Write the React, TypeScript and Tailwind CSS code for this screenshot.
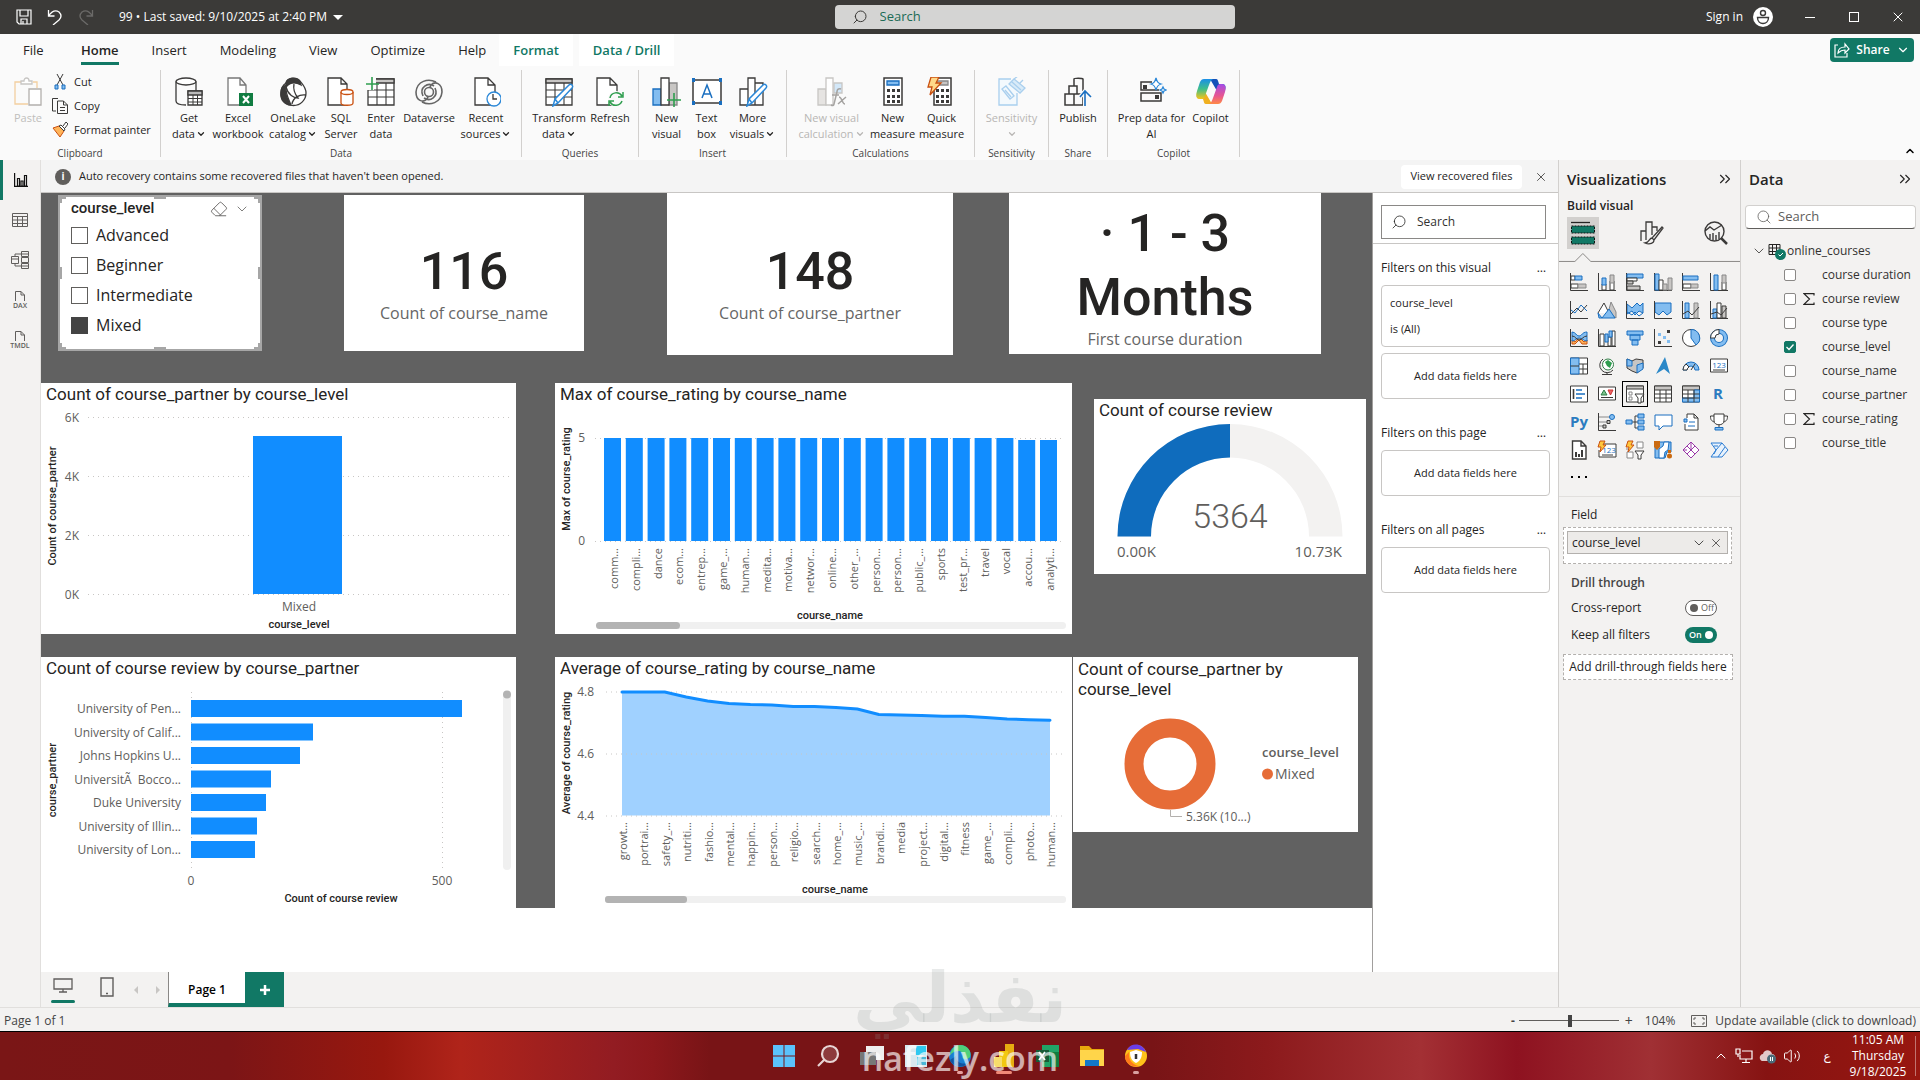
import React from 'react';
import { ChevronDown, ChevronUp, ChevronsRight, X, Search, Eraser, Volume2 } from 'lucide-react';

type Kids = { children?: React.ReactNode };

const DIN = "[font-family:Roboto,'Liberation_Sans',sans-serif]";
const BLUE = '#118dff';
const DARK = '#3b3a39';
const GREEN = '#117865';
const SKY = '#83bdf0';
const LINK = '#1a6fc0';

/* ---------- ribbon icons, 30px box ---------- */

function Big({ children }: Kids) {
  return (
    <svg viewBox="0 0 30 30" className="h-[30px] w-[30px] shrink-0" fill="none" stroke={DARK} strokeWidth="1.3" aria-hidden="true">
      {children}
    </svg>
  );
}

const Sheet = ({ x = 4 }: { x?: number }) => (
  <path d={`M${x} 1h13l7 7v20H${x}zM${x + 13} 1v7h7`} fill="#fff" />
);

const PasteIcon = () => (
  <Big>
    <g stroke="#f3cfa0"><path d="M9 5H2v22h13M20 5h4v6" /></g>
    <path d="M8 7V4h3c0-4 5-4 5 0h3v3z" stroke="#c8c6c4" fill="#fff" />
    <path d="M16 12h12v16H16z" stroke="#b3b0ad" fill="#fff" />
  </Big>
);

const GetDataIcon = () => (
  <Big>
    <ellipse cx="12" cy="4.5" rx="10" ry="3.5" fill="#fff" />
    <path d="M2 4.5V24c0 2.500 4 4 10 4M22 4.5V14" />
    <path d="M14 14h14v14H14z" fill="#fff" />
    <path d="M14 14h14v4H14z" fill="#bbb" />
    <path d="M14 21.5h14M14 25h14M19 18v10M23.5 18v10" strokeWidth="1" />
  </Big>
);

const ExcelIcon = () => (
  <Big>
    <path d="M5 1h12l6 7v20H5zM17 1v7h6" fill="#fff" stroke="#777" />
    <path d="M16 16h14v13H16z" fill="#107c41" stroke="none" />
    <path d="M20 19l6 7M26 19l-6 7" stroke="#fff" strokeWidth="2" />
  </Big>
);

const OneLakeIcon = () => (
  <Big>
    <path d="M8 6c1-5 10-7 14-2 2 3 6 6 6 12a12.500 12.500 0 0 1-25 0c0-4 2-8 5-10z" fill="#fff" />
    <path d="M8 6c2-6 11-6 14-1l1 3C18 5 12 5 8 10z" fill={DARK} />
    <path d="M8 8c-1 8 2 13 5 20C6 28 2 22 3 15c0-3 2-6 5-7z" fill={DARK} />
    <path d="M8 10c2 8 8 11 12 11-4-5-5-9-4-14M14 27c1-6 7-10 14-9" />
  </Big>
);

const SqlIcon = () => (
  <Big>
    <path d="M2 1h13l6 6v21H2zM15 1v6h6" fill="#fff" />
    <path d="M15 15v11c0 3 12 3 12 0V15" stroke="#ca5010" fill="#fff" />
    <ellipse cx="21" cy="15" rx="6" ry="2.5" stroke="#ca5010" fill="#fff" />
  </Big>
);

const TableLines = () => (
  <>
    <path d="M2 2h26v26H2z" fill="#fff" />
    <path d="M2 2h26v4H2z" fill="#c8c6c4" />
    <path d="M2 13h26M2 20h26M11 6v22M20 6v22" strokeWidth="1.1" />
  </>
);

const EnterDataIcon = () => (
  <Big>
    <TableLines />
    <path d="M0 0h10v8H8v5H0z" fill="#fafafa" stroke="none" />
    <path d="M6 0v13M0 7h13" stroke="#2f9e4f" strokeWidth="1.6" />
  </Big>
);

const DataverseIcon = () => (
  <Big>
    <g stroke="#666" strokeWidth="1.6">
      <path d="M22 5C14 1 3 4 2 15c0 9 7 11 11 7 1-1 1-2 0-3" />
      <path d="M8 25c8 4 19 1 20-10 0-9-7-11-11-7-1 1-1 2 0 3" />
      <circle cx="15" cy="15" r="4.500" />
      <path d="M9 19C5 10 14 5 20 9M21 11c4 9-5 14-11 10" />
    </g>
  </Big>
);

const RecentIcon = () => (
  <Big>
    <path d="M4 1h13l7 7v20H4zM17 1v7h7" fill="#fff" />
    <circle cx="23" cy="22" r="7" fill="#fff" stroke="#2b88d8" />
    <path d="M22 17v5h4" />
  </Big>
);

const Pencil = () => (
  <path d="M9 29l2-7L25 8c2-2 5 1 3 3L14 26zM11 22l3 4" fill="#fff" stroke="#2b88d8" strokeWidth="1.5" />
);

const TransformIcon = () => (
  <Big>
    <TableLines />
    <Pencil />
  </Big>
);

const RefreshIcon = () => (
  <Big>
    <Sheet x={2} />
    <circle cx="21" cy="22" r="8" fill="#fafafa" stroke="none" />
    <path d="M15 21c1-6 9-7 12-2m1-4v5h-5M27 24c-2 5-9 6-12 1m-1 4v-5h5" stroke="#2f9e4f" strokeWidth="1.5" />
  </Big>
);

const NewVisualIcon = () => (
  <Big>
    <path d="M1 12h8v16H1z" fill={SKY} stroke={LINK} />
    <path d="M17 6h8v22h-8z" fill="#c8c6c4" stroke="#888" />
    <path d="M9 1h8v27H9z" fill="#fff" />
    <path d="M22 16v14M15 23h14" stroke="#2f9e4f" strokeWidth="1.6" />
  </Big>
);

const TextBoxIcon = () => (
  <Big>
    <path d="M1 3h28v23H1z" fill="#fff" strokeWidth="1.5" />
    <path d="M10 21l5-13 5 13M12 17h6" stroke={LINK} strokeWidth="1.5" />
    <path d="M0 1h3v4H0zM27 1h3v4h-3zM0 24h3v4H0zM27 24h3v4h-3z" fill={LINK} stroke="none" />
  </Big>
);

const MoreVisualsIcon = () => (
  <Big>
    <path d="M2 12h8v16H2zM10 1h7v27h-7zM17 6h8v22h-8z" fill="#fff" />
    <Pencil />
  </Big>
);

const VisualCalcIcon = () => (
  <Big>
    <g stroke="#c8c6c4">
      <path d="M1 12h8v16H1z" fill="#e6e4e2" />
      <path d="M17 6h8v10h-8z" fill="#d3e8f9" />
      <path d="M9 1h7v27H9z" fill="#fff" />
    </g>
    <path d="M24 12c-3-1-4 1-4 3l-3 12c0 1-1 2-3 1M15 18h7M22 20c3 0 3 7 6 7M29 20l-8 7" stroke="#a5a3a1" strokeWidth="1.5" />
  </Big>
);

const KeyDots = () => (
  <path d="M9 12h3v3H9zM14 12h3v3h-3zM19 12h3v3h-3zM9 18h3v3H9zM14 18h3v3h-3zM19 18h3v3h-3zM9 23h3v3H9zM14 23h3v3h-3zM19 23h3v3h-3z" fill={DARK} stroke="none" />
);

const NewMeasureIcon = () => (
  <Big>
    <path d="M6 1h18v27H6z" fill="#fff" strokeWidth="1.5" />
    <path d="M9 4h12v4H9z" fill={SKY} stroke={LINK} />
    <KeyDots />
  </Big>
);

const QuickMeasureIcon = () => (
  <Big>
    <path d="M7 1h17v27H7z" fill="#fff" strokeWidth="1.5" />
    <path d="M10 4h11v4H10z" fill="#c8c6c4" stroke="#888" />
    <KeyDots />
    <path d="M4 0h8L9 6h5L3 18l2-8H1z" fill="#ffd98a" stroke="#ca5010" />
  </Big>
);

const SensitivityIcon = () => (
  <Big>
    <g stroke="#a9cfee">
      <path d="M14 2H2v26h18V16" fill="#f3f9fd" />
      <path d="M5 12l4-3 8 10-4 3zM8 13l6 7" />
      <path d="M12 7l5-5 11 9-5 5zM17 2l4-3M22 7l4-4M15 5l9 8" fill="#d9ebf8" />
    </g>
  </Big>
);

const PublishIcon = () => (
  <Big>
    <path d="M2 28V17h9v11zM6 17V9h8v8M11 28h9V17h-9M11 9V2c0-1 8-1 9 0v12" strokeWidth="1.5" />
    <path d="M22 29V15M17 20l5-6 6 6" stroke="#fafafa" strokeWidth="4" />
    <path d="M22 29V15M17 20l5-6 6 6" stroke={LINK} strokeWidth="1.6" />
  </Big>
);

const PrepIcon = () => (
  <Big>
    <path d="M15 5H4v8h18M4 16h20v8H4z" strokeWidth="1.5" />
    <path d="M6 8h4v4H6zM18 18h4v4h-4z" fill={DARK} stroke="none" />
    <path d="M19 1c1 4 2 5 5 6-3 1-4 2-5 6-1-4-2-5-5-6 3-1 4-2 5-6zM26 10l1 2 2 1-2 1-1 2-1-2-2-1 2-1z" stroke="#2b88d8" fill="#fff" />
  </Big>
);

const CopilotIcon = () => (
  <Big>
    <defs>
      <linearGradient id="cpA" x1="0" y1="0" x2="0" y2="1">
        <stop offset="0" stopColor="#1a8fe8" />
        <stop offset=".5" stopColor="#3fbf8a" />
        <stop offset="1" stopColor="#f5c518" />
      </linearGradient>
      <linearGradient id="cpB" x1="0" y1="0" x2="0" y2="1">
        <stop offset="0" stopColor="#a44be8" />
        <stop offset=".6" stopColor="#e8568f" />
        <stop offset="1" stopColor="#ff8a46" />
      </linearGradient>
    </defs>
    <g stroke="none">
      <path d="M14 2h6c2 0 2 2 3 5h3c4 0 4 3 3 7h-8z" fill="#1450b8" />
      <path d="M16 27h-6c-2 0-2-2-3-5H4c-4 0-4-3-3-7h8z" fill="#f0b020" />
      <path d="M8 2h9c-2 1-3 3-4 6L9 19c-1 3-2 3-5 3-4 0-4-4-3-8l3-9c1-2 2-3 4-3z" fill="url(#cpA)" />
      <path d="M22 27h-9c2-1 3-3 4-6l4-11c1-3 2-3 5-3 4 0 4 4 3 8l-3 9c-1 2-2 3-4 3z" fill="url(#cpB)" />
    </g>
  </Big>
);

/* ---------- ribbon ---------- */

interface RibbonItem {
  icon: React.ReactNode;
  lines: string[];
  w: string;
  arrow?: boolean;
  off?: boolean;
}

const groups: { name: string; w: string; items: RibbonItem[] }[] = [
  {
    name: 'Data',
    w: 'w-[361px]',
    items: [
      { icon: <GetDataIcon />, lines: ['Get', 'data'], w: 'w-12', arrow: true },
      { icon: <ExcelIcon />, lines: ['Excel', 'workbook'], w: 'w-[50px]' },
      { icon: <OneLakeIcon />, lines: ['OneLake', 'catalog'], w: 'w-[60px]', arrow: true },
      { icon: <SqlIcon />, lines: ['SQL', 'Server'], w: 'w-9' },
      { icon: <EnterDataIcon />, lines: ['Enter', 'data'], w: 'w-11' },
      { icon: <DataverseIcon />, lines: ['Dataverse'], w: 'w-[52px]' },
      { icon: <RecentIcon />, lines: ['Recent', 'sources'], w: 'w-[62px]', arrow: true },
    ],
  },
  {
    name: 'Queries',
    w: 'w-[117px]',
    items: [
      { icon: <TransformIcon />, lines: ['Transform', 'data'], w: 'w-[60px]', arrow: true },
      { icon: <RefreshIcon />, lines: ['Refresh'], w: 'w-[42px]' },
    ],
  },
  {
    name: 'Insert',
    w: 'w-[148px]',
    items: [
      { icon: <NewVisualIcon />, lines: ['New', 'visual'], w: 'w-11' },
      { icon: <TextBoxIcon />, lines: ['Text', 'box'], w: 'w-9' },
      { icon: <MoreVisualsIcon />, lines: ['More', 'visuals'], w: 'w-[56px]', arrow: true },
    ],
  },
  {
    name: 'Calculations',
    w: 'w-[188px]',
    items: [
      { icon: <VisualCalcIcon />, lines: ['New visual', 'calculation'], w: 'w-[74px]', arrow: true, off: true },
      { icon: <NewMeasureIcon />, lines: ['New', 'measure'], w: 'w-12' },
      { icon: <QuickMeasureIcon />, lines: ['Quick', 'measure'], w: 'w-[50px]' },
    ],
  },
  {
    name: 'Sensitivity',
    w: 'w-[74px]',
    items: [{ icon: <SensitivityIcon />, lines: ['Sensitivity', ''], w: 'w-[66px]', arrow: true, off: true }],
  },
  { name: 'Share', w: 'w-[59px]', items: [{ icon: <PublishIcon />, lines: ['Publish'], w: 'w-12' }] },
  {
    name: 'Copilot',
    w: 'w-[132px]',
    items: [
      { icon: <PrepIcon />, lines: ['Prep data for', 'AI'], w: 'w-[74px]' },
      { icon: <CopilotIcon />, lines: ['Copilot'], w: 'w-11' },
    ],
  },
];

function RibbonButton({ item }: { item: RibbonItem }) {
  return (
    <button className={`flex flex-col items-center ${item.w} ${item.off ? 'text-[#b8b6b4]' : 'text-[#252423]'}`}>
      {item.icon}
      <span className="mt-[3px] flex flex-col items-center text-[11px] leading-4 whitespace-nowrap">
        {item.lines.map((line, i) => (
          <span key={i} className="flex h-4 items-center">
            {line}
            {item.arrow && i === item.lines.length - 1 && <ChevronDown className="ml-px h-2.5 w-2.5" strokeWidth={3} />}
          </span>
        ))}
      </span>
    </button>
  );
}

function Ribbon() {
  return (
    <div className="flex h-[93px] py-[3px]">
      <div className="flex w-[161px] flex-col border-r border-[#d2d0ce]">
        <div className="flex flex-1 pl-3">
          <button className="mt-[7px] flex w-8 flex-col items-center text-[11px] leading-4 text-[#c0bebc]" disabled>
            <PasteIcon />
            <span className="mt-[3px]">Paste</span>
          </button>
          <div className="ml-2 flex flex-col text-[11px] leading-6 text-[#252423]">
            <button className="flex h-6 items-center gap-1.5">
              <svg viewBox="0 0 16 16" className="h-4 w-4" fill="none" stroke={DARK}>
                <path d="M5 0l6 11M11 0L5 11" />
                <path d="M3 11h3v4H3zM10 11h3v4h-3z" stroke={LINK} fill={SKY} />
              </svg>
              Cut
            </button>
            <button className="flex h-6 items-center gap-1.5">
              <svg viewBox="0 0 16 16" className="h-4 w-4" fill="none" stroke={DARK}>
                <path d="M4 13H.5V.5H6M5.500 3h6L15.500 7v8.500h-10zM11.500 3v4h4M8 9.500h5M8 12.500h5" />
              </svg>
              Copy
            </button>
            <button className="flex h-6 items-center gap-1.5 whitespace-nowrap">
              <svg viewBox="0 0 16 16" className="h-4 w-4" fill="none">
                <path d="M1 6l6-2 5 5-4 6z" fill="#ffb45a" stroke="#ca5010" />
                <path d="M7 4l2-1 4 4-1 2zM11 4l3-4 2 2-3 4" stroke={DARK} fill="#fff" />
              </svg>
              Format painter
            </button>
          </div>
        </div>
        <span className="text-center text-[10px] leading-2 text-[#444]">Clipboard</span>
      </div>
      {groups.map((g) => (
        <div key={g.name} className={`flex flex-col border-r border-[#d2d0ce] ${g.w}`}>
          <div className="flex flex-1 justify-center pt-[7px]">
            {g.items.map((it) => (
              <RibbonButton key={it.lines[0]} item={it} />
            ))}
          </div>
          <span className="text-center text-[10px] leading-2 text-[#444]">{g.name}</span>
        </div>
      ))}
      <button className="mt-auto mr-1 ml-auto" aria-label="Collapse ribbon">
        <ChevronUp className="h-3 w-3" strokeWidth={3} />
      </button>
    </div>
  );
}

/* ---------- title bar and tabs ---------- */

function TitleBar() {
  return (
    <header className="flex h-[34px] items-center bg-[#3b3a38] text-white">
      <div className="flex flex-[835_1_0%] items-center pl-4">
        <button aria-label="Save">
          <svg viewBox="0 0 16 16" className="h-4 w-4" fill="none" stroke="#fff" strokeWidth="1.2">
            <path d="M1 1h14v14H3l-2-2zM4 1v6h8V1M5 15v-5h6v5M7 12v3" />
          </svg>
        </button>
        <button className="ml-[15px]" aria-label="Undo">
          <svg viewBox="0 0 16 16" className="h-4 w-4" fill="none" stroke="#fff" strokeWidth="1.3">
            <path d="M1.500 1v6h6M1.500 7C5 2 9 1 12 3c3 3 2 6 0 8l-6 5" />
          </svg>
        </button>
        <button className="ml-[15px]" aria-label="Redo">
          <svg viewBox="0 0 16 16" className="h-4 w-4" fill="none" stroke="#6b6a68" strokeWidth="1.3">
            <path d="M14.500 1v6h-6M14.500 7C11 2 7 1 4 3c-3 3-2 6 0 8l6 5" />
          </svg>
        </button>
        <button className="ml-[25px] flex items-center gap-1.5 text-[12px] leading-4">
          99 • Last saved: 9/10/2025 at 2:40 PM
          <span className="h-0 w-0 border-x-[5px] border-t-[5px] border-x-transparent border-t-white" />
        </button>
      </div>
      <label className="flex h-6 w-[400px] items-center gap-3 rounded-sm bg-[#d4d4d3] pl-[17px] text-[#3b3a38]">
        <Search className="h-4 w-4 -scale-x-100" strokeWidth={1.5} />
        <input className="flex-1 bg-transparent text-[13px] outline-none placeholder:text-[#1b6b56]" placeholder="Search" />
      </label>
      <div className="flex flex-[685_1_0%] items-center justify-end pr-3.5 text-[12px]">
        <button className="flex items-center gap-2.5">
          Sign in
          <svg viewBox="0 0 20 20" className="h-5 w-5">
            <circle cx="10" cy="10" r="10" fill="#fff" />
            <circle cx="10" cy="6" r="2.500" fill="none" stroke={DARK} strokeWidth="1.4" />
            <path d="M4.500 10.500h11c0 8-11 8-11 0z" fill="none" stroke={DARK} strokeWidth="1.4" />
          </svg>
        </button>
        <button className="ml-8 h-px w-2.5 bg-white" aria-label="Minimize" />
        <button className="ml-[34px] h-2.5 w-2.5 border border-white" aria-label="Maximize" />
        <button className="ml-[31px]" aria-label="Close"><X className="h-4 w-4" strokeWidth={1.5} /></button>
      </div>
    </header>
  );
}

const tabs = ['Insert', 'Modeling', 'View', 'Optimize', 'Help'];

function Tabs() {
  return (
    <nav className="flex h-[33px] items-start pl-[23px] text-[13px] leading-8 text-[#252423]">
      <button className="w-[58px] text-left">File</button>
      <div className="flex gap-[33px]">
        <button className="flex flex-col font-semibold">
          <span className="h-7 leading-8">Home</span>
          <span className="h-[3px] w-full bg-[#117865]" />
        </button>
        {tabs.map((t) => (
          <button key={t}>{t}</button>
        ))}
      </div>
      <button className="ml-[13px] bg-white px-[14px] font-semibold text-[#117865]">Format</button>
      <button className="ml-1.5 bg-white px-[14px] font-semibold text-[#117865]">Data / Drill</button>
      <button className="mt-1 mr-1.5 ml-auto flex h-6 w-[84px] items-center justify-center gap-1.5 rounded bg-[#117865] text-[12px] leading-6 font-semibold text-white">
        <svg viewBox="0 0 16 16" className="h-4 w-4" fill="none" stroke="#fff" strokeWidth="1.2">
          <path d="M4 3H1v12h12v-4" />
          <path d="M4 11c0-4 3-6 7-6V2l4 5-4 4V8c-3 0-5 1-7 3z" />
        </svg>
        Share
        <ChevronDown className="h-3.5 w-3.5" />
      </button>
    </nav>
  );
}

/* ---------- left rail ---------- */

function Rail() {
  return (
    <nav className="flex w-[41px] flex-col border-r border-[#e1dfdd] bg-[#f3f2f1]">
      <button className="flex h-10 items-center border-l-[3px] border-[#117865] pl-[11px]" aria-label="Report view">
        <svg viewBox="0 0 14 14" className="h-3.5 w-3.5" fill="none" stroke="#111" strokeWidth="1.2">
          <path d="M.6 0v13.400H14M3.500 5.500h2v7.500h-2zM7 8h2v5H7zM10.500 2.500h2v10.500h-2z" />
        </svg>
      </button>
      <button className="flex h-10 items-center justify-center" aria-label="Table view">
        <svg viewBox="0 0 16 16" className="h-4 w-4" fill="none" stroke="#605e5c">
          <path d="M.5 1.500h15v13H.5zM.5 4.500h15M.5 8h15M.5 11.500h15M5.500 4.500v10M10.500 4.500v10" />
        </svg>
      </button>
      <button className="flex h-10 items-center justify-center" aria-label="Model view">
        <svg viewBox="0 0 18 18" className="h-[18px] w-[18px]" fill="none" stroke="#605e5c">
          <path d="M.5 5.500h7v7h-7zM.5 8h7M10.500.5h7v5h-7zM10.500 3h7M10.500 6.500h7v5h-7zM10.500 12.500h7v5h-7zM10.500 15h7M4 5.500V3h6M4 12.500V15h6" />
        </svg>
      </button>
      {['DAX', 'TMDL'].map((t) => (
        <button key={t} className="flex h-10 flex-col items-center justify-center text-[#605e5c]">
          <svg viewBox="0 0 12 11" className="h-[11px] w-3" fill="none" stroke="#605e5c">
            <path d="M1.500 10V.5H7L10.500 4v6M7 .5V4h3.500" />
          </svg>
          <span className="text-[7px] leading-[7px] font-semibold">{t}</span>
        </button>
      ))}
    </nav>
  );
}

/* ---------- report visuals ---------- */

function Visual({ title, className, children }: Kids & { title: string; className: string }) {
  return (
    <section className={`bg-white ${className}`}>
      <h2 className={`px-[5px] pb-0.5 text-[17px] leading-[22px] text-[#252423] ${DIN}`}>{title}</h2>
      {children}
    </section>
  );
}

function Tick({ x, y, anchor = 'end', children }: Kids & { x: number; y: number; anchor?: 'end' | 'middle' | 'start' }) {
  return <text x={x} y={y + 4} textAnchor={anchor} fontSize="12" fill="#605e5c">{children}</text>;
}

function AxisTitle({ x, y, vertical, children }: Kids & { x: number; y: number; vertical?: boolean }) {
  return (
    <text
      className={DIN}
      textAnchor="middle"
      fontSize="11"
      fontWeight="500"
      fill="#252423"
      transform={`translate(${x} ${y + (vertical ? 0 : 4)})${vertical ? ' rotate(-90)' : ''}`}
    >
      {children}
    </text>
  );
}

function Slant({ x, y, children }: Kids & { x: number; y: number }) {
  return (
    <text textAnchor="end" fontSize="11" fill="#605e5c" transform={`translate(${x} ${y}) rotate(-90)`}>
      {children}
    </text>
  );
}

const Dots = ({ d }: { d: string }) => <path d={d} stroke="#c8c6c4" strokeDasharray="1 4" fill="none" />;

function LevelChart() {
  return (
    <svg viewBox="0 0 475 227" className="w-full">
      {[6, 4, 2, 0].map((k, i) => (
        <React.Fragment key={k}>
          <Tick x={38} y={11 + i * 59}>{k}K</Tick>
          <Dots d={`M47 ${10.5 + i * 59}H471`} />
        </React.Fragment>
      ))}
      <rect x="212" y="29" width="89" height="158" fill={BLUE} />
      <Tick x={258} y={200} anchor="middle">Mixed</Tick>
      <AxisTitle x={258} y={217}>course_level</AxisTitle>
      <AxisTitle x={15} y={99} vertical>Count of course_partner</AxisTitle>
    </svg>
  );
}

const maxNames = [
  'comm...', 'compli...', 'dance', 'ecom...', 'entrep...', 'game_...', 'human...', 'medita...', 'motiva...', 'networ...', 'online...',
  'other_...', 'person...', 'person...', 'public_...', 'sports', 'test_pr...', 'travel', 'vocal', 'accou...', 'analyti...',
];

function MaxChart() {
  return (
    <svg viewBox="0 0 517 227" className="w-full">
      <Tick x={30} y={31}>5</Tick>
      <Tick x={30} y={134}>0</Tick>
      <Dots d="M40 31.500H509M40 134.500H509" />
      {maxNames.map((n, i) => {
        const x = 49 + i * 21.8;
        const top = i > 18 ? 33 : 31;
        return (
          <React.Fragment key={i}>
            <rect x={x} y={top} width="17" height={134 - top} fill={BLUE} />
            <Slant x={x + 14} y={141}>{n}</Slant>
          </React.Fragment>
        );
      })}
      <AxisTitle x={275} y={208}>course_name</AxisTitle>
      <AxisTitle x={15} y={72} vertical>Max of course_rating</AxisTitle>
      <rect x="41" y="215" width="470" height="7" rx="3.5" fill="#f0f0f0" />
      <rect x="41" y="215" width="84" height="7" rx="3.5" fill="#b3b3b3" />
    </svg>
  );
}

const partners: [string, number][] = [
  ['University of Pen...', 271],
  ['University of Calif...', 122],
  ['Johns Hopkins U...', 109],
  ['UniversitÃ\u00a0 Bocco...', 80],
  ['Duke University', 75],
  ['University of Illin...', 66],
  ['University of Lon...', 64],
];

function PartnerChart() {
  return (
    <svg viewBox="0 0 475 227" className="w-full">
      <Dots d="M150.500 11V189M401.500 11V189" />
      {partners.map(([name, w], i) => (
        <React.Fragment key={name}>
          <Tick x={140} y={28 + i * 23.5}>{name}</Tick>
          <rect x="150" y={19 + i * 23.5} width={w} height="17" fill={BLUE} />
        </React.Fragment>
      ))}
      <Tick x={150} y={200} anchor="middle">0</Tick>
      <Tick x={401} y={200} anchor="middle">500</Tick>
      <AxisTitle x={300} y={217}>Count of course review</AxisTitle>
      <AxisTitle x={15} y={99} vertical>course_partner</AxisTitle>
      <rect x="462" y="11" width="8" height="178" rx="4" fill="#f0f0f0" />
      <circle cx="466" cy="13.5" r="4" fill="#b3b3b3" />
    </svg>
  );
}

const avgNames = [
  'growt...', 'portrai...', 'safety_...', 'nutriti...', 'fashio...', 'mental...', 'happin...', 'person...', 'religio...', 'search...', 'home_...',
  'music_...', 'brandi...', 'media', 'project...', 'digital...', 'fitness', 'game_...', 'compli...', 'photo...', 'human...',
];
const avgY = [11, 11, 11, 16, 20, 22.5, 23.5, 24, 25.5, 25.5, 26.5, 28, 33.5, 34, 34.5, 35.3, 35.3, 36.5, 38, 38.7, 39.3];

function AverageChart() {
  const line = avgY.map((y, i) => `${67 + i * 21.4} ${y}`).join('L');
  return (
    <svg viewBox="0 0 517 227" className="w-full">
      <path d={`M${line}V134.500H67z`} fill="#a0d1ff" />
      {['4.8', '4.6', '4.4'].map((t, i) => (
        <React.Fragment key={t}>
          <Tick x={39} y={11 + i * 62}>{t}</Tick>
          <Dots d={`M51 ${11 + i * 62}H511`} />
        </React.Fragment>
      ))}
      <path d={`M${line}`} fill="none" stroke="#118dff" strokeWidth="3" strokeLinecap="round" />
      {avgNames.map((n, i) => (
        <Slant key={i} x={72 + i * 21.4} y={141}>{n}</Slant>
      ))}
      <AxisTitle x={280} y={208}>course_name</AxisTitle>
      <AxisTitle x={15} y={72} vertical>Average of course_rating</AxisTitle>
      <rect x="50" y="215" width="461" height="7" rx="3" fill="#f0f0f0" />
      <rect x="50" y="215" width="82" height="7" rx="3" fill="#b3b3b3" />
    </svg>
  );
}

function Gauge() {
  return (
    <svg viewBox="0 0 272 151" className="w-full">
      <path d="M23.500 113.500A112.500 112.500 0 0 1 248.500 113.500H215A79 79 0 0 0 57 113.500z" fill="#f3f2f1" />
      <path d="M23.500 113.500A112.500 112.500 0 0 1 136 1V34.500A79 79 0 0 0 57 113.500z" fill="#0f6cbd" />
      <text className={DIN} x="136" y="105" textAnchor="middle" fontSize="34" fontWeight="300" fill="#605e5c">5364</text>
      <text x="23" y="134" fontSize="15" fill="#605e5c">0.00K</text>
      <text x="248" y="134" textAnchor="end" fontSize="15" fill="#605e5c">10.73K</text>
    </svg>
  );
}

function Donut() {
  return (
    <svg viewBox="0 0 285 132" className="w-full">
      <circle cx="97" cy="64" r="36" fill="none" stroke="#e66c37" strokeWidth="19" />
      <path d="M97.500 110V116.500H109" fill="none" stroke="#b3b0ad" />
      <Tick x={113} y={117} anchor="start">5.36K (10...)</Tick>
      <text x="189" y="57" fontSize="13" fontWeight="600" fill="#605e5c">course_level</text>
      <circle cx="194.500" cy="74" r="5.500" fill="#e66c37" />
      <text x="202" y="79" fontSize="14" fill="#605e5c">Mixed</text>
    </svg>
  );
}

function Card({ value, label, className }: { value: string[]; label: string; className: string }) {
  return (
    <section className={`flex flex-col items-center bg-white ${className}`}>
      <div className={`text-center text-[52px] leading-[64px] font-medium text-[#252423] ${DIN}`}>
        {value.map((v) => (
          <p key={v}>{v}</p>
        ))}
      </div>
      <p className="text-[16px] leading-[18px] text-[#666]">{label}</p>
    </section>
  );
}

function Handles() {
  const h = 'absolute border-[#a6a6a6]';
  return (
    <>
      <i className={`${h} -top-0.5 -left-0.5 h-2 w-2 border-t-4 border-l-4`} />
      <i className={`${h} -top-0.5 -right-0.5 h-2 w-2 border-t-4 border-r-4`} />
      <i className={`${h} -bottom-0.5 -left-0.5 h-2 w-2 border-b-4 border-l-4`} />
      <i className={`${h} -right-0.5 -bottom-0.5 h-2 w-2 border-r-4 border-b-4`} />
      <i className={`${h} -top-0.5 left-1/2 w-3 -translate-x-1/2 border-t-4`} />
      <i className={`${h} -bottom-0.5 left-1/2 w-3 -translate-x-1/2 border-b-4`} />
      <i className={`${h} top-1/2 -left-0.5 h-3 -translate-y-1/2 border-l-4`} />
      <i className={`${h} top-1/2 -right-0.5 h-3 -translate-y-1/2 border-r-4`} />
    </>
  );
}

function Slicer() {
  return (
    <section className="relative col-start-2 mt-0.5 h-[156px] border-2 border-[#a6a6a6] bg-white pl-[11px]">
      <div className="flex h-[23px] items-center pr-2.5 text-[#605e5c]">
        <h2 className={`flex-1 text-[15px] font-medium text-[#252423] ${DIN}`}>course_level</h2>
        <Eraser className="h-[18px] w-[18px]" strokeWidth={1.2} />
        <ChevronDown className="ml-1.5 h-4 w-4" strokeWidth={1.2} />
      </div>
      {['Advanced', 'Beginner', 'Intermediate', 'Mixed'].map((l) => (
        <label key={l} className="flex h-[30px] items-center gap-2 text-[16px] text-[#252423]">
          <input
            type="checkbox"
            defaultChecked={l === 'Mixed'}
            className="h-[17px] w-[17px] appearance-none border border-[#605e5c] bg-white checked:border-[#444] checked:bg-[#444]"
          />
          {l}
        </label>
      ))}
      <Handles />
    </section>
  );
}

function Report() {
  return (
    <main className="min-w-0 flex-1 bg-white">
      <div className="bg-[#616161]">
        <div className="grid h-[190px] grid-cols-[17fr_204fr_82fr_240fr_83fr_286fr_56fr_312fr_51fr] items-start">
          <Slicer />
          <Card className="col-start-4 mt-0.5 h-[156px] pt-[45px]" value={['116']} label="Count of course_name" />
          <Card className="col-start-6 h-[162px] pt-[47px]" value={['148']} label="Count of course_partner" />
          <Card className="col-start-8 h-[161px] pt-[9px]" value={['· 1 - 3', 'Months']} label="First course duration" />
        </div>
        <div className="grid h-[274px] grid-cols-[475fr_39fr_517fr_22fr_272fr_6fr] items-start">
          <Visual title="Count of course_partner by course_level" className="col-start-1"><LevelChart /></Visual>
          <Visual title="Max of course_rating by course_name" className="col-start-3"><MaxChart /></Visual>
          <Visual title="Count of course review" className="col-start-5 mt-4"><Gauge /></Visual>
        </div>
        <div className="grid grid-cols-[475fr_39fr_517fr_1fr_285fr_14fr] items-start">
          <Visual title="Count of course review by course_partner" className="col-start-1"><PartnerChart /></Visual>
          <Visual title="Average of course_rating by course_name" className="col-start-3"><AverageChart /></Visual>
          <section className="col-start-5 bg-white pt-0.5">
            <h2 className={`px-[5px] pb-px text-[17px] leading-5 text-[#252423] ${DIN}`}>
              Count of course_partner by
              <br />
              course_level
            </h2>
            <Donut />
          </section>
        </div>
      </div>
    </main>
  );
}

function InfoBar() {
  return (
    <div className="flex h-[33px] items-center border-b border-[#c8c6c4] bg-[#f4f4f4] pt-px pr-2.5 pl-3.5 text-[#252423]">
      <span className="mr-2 flex h-4 w-4 items-center justify-center rounded-full bg-[#605e5c] text-[10px] font-bold text-white">i</span>
      <span className="flex-1 text-[11px]">Auto recovery contains some recovered files that haven't been opened.</span>
      <button className="h-6 w-[121px] rounded-sm bg-white text-[11px]">View recovered files</button>
      <button className="ml-3" aria-label="Dismiss"><X className="h-3.5 w-3.5" strokeWidth={1.3} /></button>
    </div>
  );
}

/* ---------- filters ---------- */

const AddBox = () => (
  <button className="h-[46px] w-full rounded-sm border border-[#c8c6c4] bg-white text-[11px]">Add data fields here</button>
);

const SectionHead = ({ children }: Kids) => (
  <h3 className="flex h-8 items-center justify-between pr-1 pb-0.5">
    {children}
    <button className="leading-3" aria-label="More options">…</button>
  </h3>
);

function Filters() {
  return (
    <aside className="w-[186px] border-l border-[#a19f9d] bg-white text-[12px] text-[#252423]">
      <div className="border-b border-[#c8c6c4] pt-3 pr-3 pb-1 pl-2">
        <label className="flex h-[34px] items-center gap-2.5 border border-[#8a8886] pl-[9px]">
          <Search className="h-4 w-4 -scale-x-100" strokeWidth={1.2} />
          <input className="w-24 bg-transparent outline-none placeholder:text-[#323130]" placeholder="Search" />
        </label>
      </div>
      <div className="pt-[9px] pr-2 pl-2">
        <SectionHead>Filters on this visual</SectionHead>
        <div className="mb-1.5 h-[62px] rounded-sm border border-[#c8c6c4] px-2 pt-1 text-[11px] leading-[26px]">
          <p>course_level</p>
          <p>is (All)</p>
        </div>
        <AddBox />
        <div className="h-[19px]" />
        <SectionHead>Filters on this page</SectionHead>
        <AddBox />
        <div className="h-[19px]" />
        <SectionHead>Filters on all pages</SectionHead>
        <AddBox />
      </div>
    </aside>
  );
}

/* ---------- visualizations ---------- */

const Axis = () => <path d="M.5 0v17.500H18" />;
const MiniBolt = () => <path d="M2 0h5L5 4h3l-6 7 1-5H0z" fill="#ffc83d" stroke="#ca5010" />;

const vizIcons: [string, React.ReactNode][] = [
  ['Stacked bar', <><Axis /><path d="M1 3h4v4H1zM1 11h7v4H1z" fill="#fff" /><path d="M5 3h7v4H5z" fill={SKY} stroke={LINK} /><path d="M8 11h8v4H8z" fill="#c8c6c4" stroke="#888" /></>],
  ['Stacked column', <><Axis /><path d="M4 11h4v6H4zM12 8h4v9h-4z" fill="#fff" /><path d="M4 5h4v7H4z" fill={SKY} stroke={LINK} /><path d="M12 2h4v8h-4z" fill="#c8c6c4" stroke="#888" /></>],
  ['Clustered bar', <><Axis /><path d="M1 1h16v4H1z" fill={SKY} stroke={LINK} /><path d="M1 5h10v3H1z" fill="#fff" /><path d="M1 8h6v3H1zM1 13h13v4H1z" fill="#c8c6c4" /></>],
  ['Clustered column', <><Axis /><path d="M1 1h4v16H1z" fill={SKY} stroke={LINK} /><path d="M5 7h4v10H5z" fill="#fff" /><path d="M9 11h4v6H9zM14 5h4v12h-4z" fill="#c8c6c4" stroke="#888" /></>],
  ['100% bar', <><Axis /><path d="M1 11h8v4H1z" fill="#fff" /><path d="M1 3h15v4H1z" fill={SKY} stroke={LINK} /><path d="M9 11h7v4H9z" fill="#c8c6c4" stroke="#888" /></>],
  ['100% column', <><Axis /><path d="M4 2h4v15H4z" fill={SKY} stroke={LINK} /><path d="M12 9h4v8h-4z" fill="#fff" /><path d="M12 2h4v8h-4z" fill="#c8c6c4" stroke="#888" /></>],
  ['Line', <><Axis /><path d="M1 13l6-6 4 4 6-7" /><path d="M1 9l4 3 6-8 6 6" stroke={LINK} /></>],
  ['Area', <><path d="M10 12l3-11 5 10v6z" fill="#c8c6c4" stroke="#888" /><path d="M0 12L6 2l5 10" fill="#fff" /><path d="M1 17L0 12l4 5 7-9 6 9z" fill={SKY} stroke={LINK} /></>],
  ['Stacked area', <><path d="M1 3l5 4 5-5 3 3 3-3v10l-4-2-4 4-3-4-5 3z" fill={SKY} stroke={LINK} /><path d="M1 11l5 3 3-3 4 4 4-3" stroke={LINK} /><Axis /></>],
  ['100% area', <><path d="M1 2h16v9l-4 3-4-4-4 4-4-3z" fill={SKY} stroke={LINK} /><Axis /></>],
  ['Line and stacked column', <><Axis /><path d="M3 2h4v15H3z" fill={SKY} stroke={LINK} /><path d="M12 2h4v15h-4z" fill="#c8c6c4" stroke="#888" /><path d="M1 13l5-3 4 4 7-8" /></>],
  ['Line and clustered column', <><Axis /><path d="M3 8h4v9H3z" fill={SKY} stroke={LINK} /><path d="M7 2h4v15H7z" fill="#fff" /><path d="M12 5h4v12h-4z" fill="#c8c6c4" /><path d="M1 13l6-2 4 3 6-7" /></>],
  ['Ribbon', <><Axis /><path d="M2 15h3l4-4 3 4h5v-4l-3 2-5-5-4 5-3-2z" fill="#ffb45a" stroke="#ca5010" /><path d="M2 3c4 0 4 4 7 4s3-4 8-4v9c-4 0-4-3-8-3s-3 3-7 3z" fill={SKY} stroke={LINK} /><path d="M2 7c4 0 4 4 7 4s4-4 8-4" stroke={DARK} /></>],
  ['Waterfall', <><Axis /><path d="M2 5h4v12H2zM10 8h3v9h-3zM14 2h3v15h-3z" fill="#fff" /><path d="M7 5h3v8H7zM11 2h3v6h-3z" fill={SKY} stroke={LINK} /></>],
  ['Funnel', <path d="M1 2h16v4H1zM4 6h10v5H4zM6 11h6v5H6z" fill={SKY} stroke={LINK} />],
  ['Scatter', <><Axis /><path d="M13 1h3v3h-3zM4 12h3v3H4z" fill={DARK} stroke="none" /><path d="M4 4h3v3H4zM9 7h3v3H9zM13 11h3v3h-3z" fill={SKY} stroke="none" /></>],
  ['Pie', <><circle cx="9" cy="9" r="8.5" fill="#fff" /><path d="M9 9V.5A8.500 8.500 0 0 1 14 16z" fill={SKY} stroke={LINK} /></>],
  ['Donut', <><circle cx="9" cy="9" r="6.5" stroke={LINK} strokeWidth="5" /><circle cx="9" cy="9" r="6.5" stroke={SKY} strokeWidth="3" /><path d="M9 .5A8.500 8.500 0 0 0 .5 9H5a4 4 0 0 1 4-4z" fill="#fff" /></>],
  ['Treemap', <><path d="M.5 1h17v16H.5z" fill="#fff" /><path d="M.5 1H9v16H.5z" fill={SKY} stroke={LINK} /><path d="M.5 9H9M9 7h9M9 12h9M13 7v10" /></>],
  ['Map', <><path d="M5 2a7.500 7.500 0 1 0 10 11" /><circle cx="10" cy="7.5" r="5.5" fill="#fff" stroke="#2f7d46" /><path d="M7 5l3-2 4 3-2 5-3-2z" fill="#2f9e4f" stroke="none" /><path d="M9 15v2M4 17.500h10" /></>],
  ['Filled map', <><path d="M1 2l5 2 4-2 7 1v8l-6 5-5-2-5-3z" fill="#c8c6c4" /><path d="M1 2l5 2v5H1zM11 8l6-2v6l-6 4z" fill={SKY} stroke={LINK} /></>],
  ['Azure map', <path d="M11 0L2 17l8-5 6 5z" fill="#2b88c8" stroke="none" />],
  ['Gauge', <><path d="M1 13a8 8 0 0 1 16 0h-4a4 4 0 0 0-8 0z" fill={SKY} stroke={LINK} /><path d="M1 13a8 8 0 0 1 3-6l3 3a4 4 0 0 0-2 3z" fill="#fff" /><path d="M9 13l4-6" /></>],
  ['Card', <><path d="M.5 2h17v13H.5z" fill="#fff" /><path d="M3 13h12" /><text x="9" y="10.500" fontSize="8" textAnchor="middle" fill={LINK} stroke="none">123</text></>],
  ['Multi-row card', <><path d="M.5 1h17v16H.5z" fill="#fff" /><path d="M3.500 4v10" strokeWidth="1.6" /><path d="M6 5h6M6 9h9M6 13h6" stroke={LINK} strokeWidth="1.6" /></>],
  ['KPI', <><path d="M.5 2h17v13H.5z" fill="#fff" /><path d="M3 10l3-5 3 5z" fill="#7ac28b" stroke="#2f7d46" /><path d="M10 5h5l-2.500 5z" fill="#e66" stroke="#c33" /><path d="M3 12.500h12" /></>],
  ['Slicer', <><path d="M.5 1h17v16H.5z" fill="#fff" /><path d="M.5 1h17v3H.5z" fill="#c8c6c4" /><path d="M3 7h3v3H3zM3 12h3v3H3z" stroke="#888" /><path d="M9 9h9l-3 4v5h-3v-5z" fill="#fff" /></>],
  ['Table', <><path d="M.5 1h17v16H.5z" fill="#fff" /><path d="M.5 1h17v4H.5z" fill="#c8c6c4" /><path d="M.5 9h17M.5 13h17M6 5v12M12 5v12" /></>],
  ['Matrix', <><path d="M.5 1h17v16H.5z" fill="#fff" /><path d="M.5 1h17v4H.5z" fill="#c8c6c4" /><path d="M12 5h5.500v12H.5v-4H12z" fill={SKY} stroke={LINK} /><path d="M.5 9h17M.5 13h17M6 5v12M12 5v12" /></>],
  ['R script', <text x="8" y="14" fontSize="15" fontWeight="700" textAnchor="middle" fill="#2b7cc0" stroke="none">R</text>],
  ['Python', <text x="9" y="14" fontSize="15" fontWeight="700" textAnchor="middle" fill="#2b7cc0" stroke="none">Py</text>],
  ['Key influencers', <><Axis /><path d="M1 4h12M1 9h8M1 13h4" stroke="#888" /><circle cx="14" cy="4" r="2.5" fill={SKY} stroke={LINK} /><path d="M9 7.500h3v3H9zM5 12h3v3H5z" fill="#c8c6c4" /></>],
  ['Decomposition tree', <><path d="M6 9h6M9 3v12M9 3h3M9 15h3" /><path d="M0 7h6v4H0zM12 1h6v4h-6zM12 7h6v4h-6zM12 13h6v4h-6z" fill={SKY} stroke={LINK} /></>],
  ['Q&A', <path d="M1 2h17v11H9l-4 4v-4H1z" fill="#fff" stroke={LINK} />],
  ['Narrative', <><path d="M5 5V1h7l4 4v12H3v-6M12 1v4h4" fill="#fff" /><path d="M2 6h3v3H2z" fill={SKY} stroke={LINK} /><path d="M7 9h6M6 13h7" stroke={LINK} /></>],
  ['Goals', <><path d="M4 1h10v7c0 5-10 5-10 0zM4 3H.5c0 4 1 5 4 6M14 3h3.500c0 4-1 5-4 6M9 12v4" fill="#fff" /><path d="M5 14.500h8V17H5z" fill={SKY} stroke={LINK} /></>],
  ['Paginated report', <><path d="M2.500 0H11l5 5v13H2.500zM11 0v5h5" fill="#fff" strokeWidth="1.4" /><path d="M5 11h2v5H5zM8 13h2v3H8zM11 9h2v7h-2z" fill={DARK} stroke="none" /></>],
  ['Card (new)', <><path d="M3 3h15v13H1V9" fill="#fff" /><path d="M4 14h11" /><text x="11" y="12" fontSize="8" textAnchor="middle" fill={LINK} stroke="none">123</text><MiniBolt /></>],
  ['Slicer (new)', <><path d="M11 1h6v6h-6zM1 11h6v6H1zM1 9V7" stroke="#888" fill="#fff" /><path d="M9 10h9l-3 4v4h-3v-4z" fill="#fff" /><MiniBolt /></>],
  ['ArcGIS', <><path d="M1 1h16v10H13l-2 6H1z" fill={SKY} stroke={LINK} /><path d="M10 1L9 5l-4 3v9h5l1-6 3-2 1-8z" fill="#fff" stroke={LINK} /><path d="M0 0h6v6L3 9 0 6zM13 15a2.500 2.500 0 1 0 5 0 2.500 2.500 0 0 0-5 0zM14 9h3v3h-3z" fill="#ca6a10" stroke="none" /></>],
  ['Power Apps', <><path d="M9 1l8 8-8 8-8-8z" fill="#fff" stroke="#9a3aa8" /><path d="M5 5l8 8M13 5l-8 8M9 9V1M1 9h4" stroke="#9a3aa8" /></>],
  ['Power Automate', <path d="M1 2h11l6 7-6 7H1l5-7zM6 9l6-7M8 16l7-10M4 5h4M4 13l2-4" stroke="#2b7cd3" fill="#e8f2fc" />],
];

function PaneTitle({ children }: Kids) {
  return (
    <div className="flex h-[33px] items-end justify-between pr-1.5 pl-2 text-[#252423]">
      <h2 className="text-[15px] leading-[27px] font-semibold">{children}</h2>
      <button className="mb-[5px]" aria-label="Collapse pane"><ChevronsRight className="h-[18px] w-[18px]" strokeWidth={1.5} /></button>
    </div>
  );
}

function Toggle({ label, on }: { label: string; on?: boolean }) {
  return (
    <label className="flex h-[27px] items-center justify-between pr-[23px] pl-3">
      {label}
      <input type="checkbox" role="switch" defaultChecked={on} className="sr-only" />
      {on ? (
        <span className="flex h-4 w-8 items-center justify-between rounded-full bg-[#117865] px-1 text-[9px] font-semibold text-white">
          On
          <i className="h-2 w-2 rounded-full bg-white" />
        </span>
      ) : (
        <span className="flex h-4 w-8 items-center justify-between rounded-full border border-[#605e5c] bg-white pr-0.5 pl-1 text-[9px] text-[#605e5c]">
          <i className="h-2 w-2 rounded-full bg-[#605e5c]" />
          Off
        </span>
      )}
    </label>
  );
}

function Visualizations() {
  return (
    <aside className="w-[182px] border-l border-[#d2d0ce] bg-[#f3f2f1] text-[12px] text-[#252423]">
      <PaneTitle>Visualizations</PaneTitle>
      <h3 className="h-6 pl-2 text-[12px] leading-[26px] font-semibold">Build visual</h3>
      <div className="flex h-8 items-center justify-between pr-3 pl-2">
        <button className="flex h-8 w-8 items-center justify-center bg-[#d2d0ce]" aria-label="Build">
          <svg viewBox="0 0 24 24" className="h-6 w-6">
            <path d="M0 1.500h19" stroke="#252423" strokeWidth="1.3" />
            <path d="M.5 5h23v7H.5zM.5 16h23v7H.5z" fill={GREEN} stroke="#111" strokeDasharray="2 1" />
          </svg>
        </button>
        <button aria-label="Format">
          <svg viewBox="0 0 24 24" className="h-6 w-6" fill="none" stroke={DARK} strokeWidth="1.3">
            <path d="M1 20V10h5V1h6v13M6 10v9M12 6h5v4" />
            <path d="M22 6L12 17l2 2L23 7zM12 17c-3 0-2 4-7 5 5 2 9 0 9-3" fill="#f3f2f1" />
          </svg>
        </button>
        <button aria-label="Analytics">
          <svg viewBox="0 0 24 24" className="h-6 w-6" fill="none" stroke={DARK} strokeWidth="1.4">
            <circle cx="10.5" cy="10.5" r="9.5" />
            <path d="M1 10l5-4 4 3 8-5M6 18v-5M9 19v-7M12 19v-5M15 18v-7" />
            <path d="M17 17l6 6" strokeWidth="2.5" />
          </svg>
        </button>
      </div>
      <svg viewBox="0 0 182 13" className="h-[13px] w-full" fill="none" stroke="#8a8886">
        <path d="M0 12.500h16l8-8 8 8h150" />
      </svg>
      <div className="mt-1.5 ml-1.5 grid w-[168px] grid-cols-6">
        {vizIcons.map(([name, art]) => (
          <button
            key={name}
            aria-label={name}
            className={`flex h-7 items-center justify-center ${name === 'Slicer' ? 'outline outline-1 -outline-offset-2 outline-black' : ''}`}
          >
            <svg viewBox="0 0 18 18" className="h-[18px] w-[18px] overflow-visible" fill="none" stroke={DARK}>{art}</svg>
          </button>
        ))}
      </div>
      <button className="flex h-[26px] items-center gap-[5px] pl-3" aria-label="More visuals">
        <i className="h-0.5 w-0.5 bg-black" />
        <i className="h-0.5 w-0.5 bg-black" />
        <i className="h-0.5 w-0.5 bg-black" />
      </button>
      <div className="mt-1.5 border-t border-[#e1dfdd] pt-1.5">
        <h3 className="pl-3 leading-6">Field</h3>
        <div className="mr-2 ml-1 h-[37px] border border-dashed border-[#b3b0ad] bg-white p-[3px]">
          <div className="flex h-[23px] items-center border border-[#b3b0ad] bg-[#edebe9] px-1">
            <span className="flex-1">course_level</span>
            <ChevronDown className="mr-0.5 h-4 w-4" strokeWidth={1.2} />
            <X className="h-3.5 w-3.5" strokeWidth={1.2} />
          </div>
        </div>
        <h3 className="mt-[7px] -mb-px pl-3 leading-6 font-semibold text-[#444]">Drill through</h3>
        <Toggle label="Cross-report" />
        <Toggle label="Keep all filters" on />
        <button className="mt-1.5 ml-1 h-[26px] w-[170px] border border-dashed border-[#b3b0ad] bg-white text-[12px] whitespace-nowrap">
          Add drill-through fields here
        </button>
      </div>
    </aside>
  );
}

/* ---------- data pane ---------- */

const fields = [
  { name: 'course duration' },
  { name: 'course review', sum: true },
  { name: 'course type' },
  { name: 'course_level', on: true },
  { name: 'course_name' },
  { name: 'course_partner' },
  { name: 'course_rating', sum: true },
  { name: 'course_title' },
];

function DataPane() {
  return (
    <aside className="w-[180px] border-l border-[#d2d0ce] bg-[#f3f2f1] text-[12px] text-[#323130]">
      <PaneTitle>Data</PaneTitle>
      <label className="mx-1 mt-3 flex h-6 items-center gap-1.5 rounded border border-b-[#605e5c] border-[#d2d0ce] bg-white pl-2.5 text-[#605e5c]">
        <Search className="h-4 w-4" strokeWidth={1.2} />
        <input className="w-28 bg-transparent text-[13px] outline-none placeholder:text-[#605e5c]" placeholder="Search" />
      </label>
      <button className="mt-2.5 flex h-6 items-center pl-2.5">
        <ChevronDown className="h-4 w-4" strokeWidth={1.2} />
        <svg viewBox="0 0 20 18" className="h-[18px] w-5" fill="none" stroke="#252423">
          <path d="M2 2.500h11v10H2zM2 6h11M2 9.500h11M5.500 2.500v10M9.500 2.500v10" />
          <circle cx="13.5" cy="12.5" r="5.5" fill={GREEN} stroke="none" />
          <path d="M11.500 12.500l1.500 1.500 3-3" stroke="#fff" />
        </svg>
        online_courses
      </button>
      {fields.map((f) => (
        <label key={f.name} className="flex h-6 items-center pl-[43px]">
          <input
            type="checkbox"
            defaultChecked={f.on}
            className="h-3 w-3 appearance-none rounded-xs border border-[#8a8886] bg-white checked:border-[#117865] checked:bg-[#117865]"
          />
          {f.on && (
            <svg viewBox="0 0 12 12" className="-ml-3 h-3 w-3" fill="none" stroke="#fff" strokeWidth="1.3">
              <path d="M2.500 6l2.500 2.500 4.500-5" />
            </svg>
          )}
          <span className="flex w-[26px] justify-center">
            {f.sum && (
              <svg viewBox="0 0 12 12" className="h-3 w-3" fill="none" stroke="#252423" strokeWidth="1.2">
                <path d="M11 2.500V.6H1L6.500 6 1 11.400h10V9.500" />
              </svg>
            )}
          </span>
          {f.name}
        </label>
      ))}
    </aside>
  );
}

/* ---------- bottom bars ---------- */

function PageTabs() {
  return (
    <div className="flex h-[35px] bg-[#f3f2f1] text-[12px]">
      <button className="flex w-11 flex-col items-center pt-1.5" aria-label="Desktop layout">
        <svg viewBox="0 0 20 15" className="h-[15px] w-5" fill="none" stroke="#605e5c" strokeWidth="1.3">
          <path d="M1 1h18v10H1zM10 11v3M6 14h8" />
        </svg>
        <i className="mt-[7px] h-[3px] w-6 rounded-full bg-[#117865]" />
      </button>
      <button className="ml-[15px] pb-1.5" aria-label="Mobile layout">
        <svg viewBox="0 0 14 20" className="h-5 w-3.5" fill="none" stroke="#605e5c" strokeWidth="1.4">
          <path d="M1 1h12v18H1zM6 16.500h2" />
        </svg>
      </button>
      <span className="ml-5 flex flex-1 items-center">
        <i className="mr-[18px] h-0 w-0 border-y-4 border-r-4 border-y-transparent border-r-[#c8c6c4]" />
        <i className="mr-2 h-0 w-0 border-y-4 border-l-4 border-y-transparent border-l-[#c8c6c4]" />
        <button className="h-full w-[77px] border-b-4 border-l border-b-[#117865] border-l-[#8a8886] bg-white pt-1 font-semibold">Page 1</button>
        <button className="flex h-full w-[39px] items-center justify-center bg-[#117865]" aria-label="New page">
          <svg viewBox="0 0 12 12" className="h-3 w-3"><path d="M6 1v10M1 6h10" stroke="#fff" strokeWidth="2.5" /></svg>
        </button>
      </span>
    </div>
  );
}

function StatusBar() {
  return (
    <div className="flex h-6 items-center border-t border-[#e1dfdd] bg-[#f3f2f1] px-1 pt-0.5 text-[12px] text-[#444]">
      <span className="flex-1">Page 1 of 1</span>
      <button aria-label="Zoom out" className="mr-1 font-bold">-</button>
      <input
        type="range"
        aria-label="Zoom"
        defaultValue={51}
        className="h-3 w-[100px] appearance-none bg-[linear-gradient(#605e5c,#605e5c)] bg-[length:100%_1px] bg-center bg-no-repeat [&::-webkit-slider-thumb]:h-3 [&::-webkit-slider-thumb]:w-1 [&::-webkit-slider-thumb]:appearance-none [&::-webkit-slider-thumb]:bg-[#444]"
      />
      <button aria-label="Zoom in" className="ml-1.5 text-[14px]">+</button>
      <span className="ml-3">104%</span>
      <button className="mr-2 ml-4" aria-label="Fit to page">
        <svg viewBox="0 0 16 12" className="h-3 w-4" fill="none" stroke="#605e5c">
          <path d="M.5.5h15v11H.5zM3 5V3h2M11 3h2v2M13 7v2h-2M5 9H3V7" />
        </svg>
      </button>
      <a href="#update">Update available (click to download)</a>
    </div>
  );
}

const TaskApp = ({ label, running, children }: Kids & { label: string; running?: string }) => (
  <button className="relative flex w-11 justify-center" aria-label={label}>
    <svg viewBox="0 0 24 24" className="h-6 w-6" fill="none">{children}</svg>
    {running && <i className={`absolute -bottom-1.5 h-[3px] rounded-full ${running}`} />}
  </button>
);

function Taskbar() {
  return (
    <footer className="grid h-[49px] grid-cols-[1fr_auto_1fr] items-center border-t border-black bg-[linear-gradient(90deg,#7a1616_0%,#7c1516_12%,#98180f_20%,#b0241a_24%,#921c22_32%,#8d181c_34%,#781416_37%,#781416_60%,#8c1a1c_66%,#a33034_74%,#8e1220_79%,#a03034_86%,#861312_92%,#981710_100%)] text-[12px] text-white">
      <span />
      <div className="flex">
        <TaskApp label="Start">
          <path d="M1 1h10.500v10.500H1zM12.500 1H23v10.500H12.500zM1 12.500h10.500V23H1zM12.500 12.500H23V23H12.500z" fill="#5bc2fb" />
        </TaskApp>
        <TaskApp label="Search">
          <circle cx="14" cy="10" r="8" stroke="#e8d5d5" strokeWidth="2.2" fill="#8d3a3c" />
          <path d="M8 16l-6 6" stroke="#e8d5d5" strokeWidth="2.2" />
        </TaskApp>
        <TaskApp label="Task view">
          <path d="M6 2h18v14H6z" fill="#eee" />
          <path d="M0 8h16v13H0z" fill="#777" />
        </TaskApp>
        <TaskApp label="Widgets">
          <path d="M1 1h22v22H1z" fill="#d8e8ee" />
          <path d="M12 2h10v9H12z" fill="#2fc8f0" />
          <path d="M13 13h9v8h-9z" fill="#49b8d8" />
        </TaskApp>
        <TaskApp label="Edge" running="w-1.5 bg-[#e8a0a0]">
          <circle cx="12" cy="12" r="11" fill="#1b7fd0" />
          <path d="M12 1c8 0 12 7 10 12-2 3-9 3-7-1 1-6-8-7-13-1C3 5 7 1 12 1z" fill="#4fd07a" />
          <path d="M8 12c0 6 5 9 12 7-5 6-15 4-18-3" fill="#1255a0" />
        </TaskApp>
        <TaskApp label="Power BI" running="w-4 bg-[#f08a78]">
          <path d="M13 0h9v23h-9z" fill="#e6ad10" />
          <path d="M7 7h9v16H7z" fill="#f2c811" />
          <path d="M2 13h8v10H2z" fill="#f7dd6b" />
        </TaskApp>
        <TaskApp label="Excel">
          <path d="M6 1h17v22H6z" fill="#21a366" />
          <path d="M14 8h9v15H14z" fill="#107c41" />
          <path d="M0 6h13v12H0z" fill="#185c37" />
          <path d="M3 8l6 8M9 8l-6 8" stroke="#fff" strokeWidth="1.8" />
        </TaskApp>
        <TaskApp label="File Explorer">
          <path d="M0 2h9l3 3h12v17H0z" fill="#e8a80c" />
          <path d="M0 6h24v16H0z" fill="#ffd54a" />
          <path d="M5 16h14v6H5z" fill="#1478c8" />
        </TaskApp>
        <TaskApp label="Secure browser" running="w-1.5 bg-[#d8a0a0]">
          <circle cx="12" cy="12" r="11" fill="#ffc21a" />
          <path d="M3 6C7-2 19-1 22 8l-8-3z" fill="#6a3de8" />
          <path d="M1 12c0 8 8 12 14 10-6-1-11-6-10-14z" fill="#ff7a1a" />
          <path d="M6 8l6-2 6 2c0 6-2 9-6 11-4-2-6-5-6-11z" fill="#fff" />
          <path d="M12 10v5" stroke="#333" strokeWidth="2.5" />
        </TaskApp>
      </div>
      <div className="flex items-center justify-end pr-1">
        <ChevronUp className="h-4 w-4" strokeWidth={1.5} />
        <svg viewBox="0 0 18 16" className="ml-1.5 h-4 w-[18px]" fill="none" stroke="#fff" strokeWidth="1.2">
          <path d="M7 3h10v8H5V7M11 11v3M7 14.500h8M1 1h4v5H1zM3 6v3" />
        </svg>
        <svg viewBox="0 0 18 16" className="ml-1.5 h-4 w-[18px]">
          <path d="M3 13C-1 11 1 6 4 6c1-5 8-5 9 0 4 0 5 7 0 7z" fill="#e3c9ca" />
          <circle cx="12.5" cy="11" r="4.5" fill="#4a6a78" />
          <path d="M11.500 9v4M13.500 9v4" stroke="#fff" />
        </svg>
        <Volume2 className="ml-1.5 h-[18px] w-[18px]" strokeWidth={1.3} />
        <span className="ml-[18px] w-4 text-center [font-family:'DejaVu_Sans',sans-serif]" lang="ar">ع</span>
        <time className="ml-3 w-[62px] text-center text-[12px] leading-4">
          11:05 AM
          <br />
          Thursday
          <br />
          9/18/2025
        </time>
        <i className="ml-1.5 h-10 w-px bg-white/40" />
      </div>
    </footer>
  );
}

function Watermark() {
  return (
    <div className="pointer-events-none absolute inset-x-0 bottom-0 flex flex-col items-center font-semibold">
      <span className="text-[70px] leading-[84px] font-bold text-[#8a9494]/20 [font-family:'DejaVu_Sans',sans-serif]" lang="ar" dir="rtl">نفذلي</span>
      <span className="pb-1 text-[34px] leading-9 text-white/65">nafezly.com</span>
    </div>
  );
}

export default function App() {
  return (
    <div className="relative flex min-h-screen flex-col bg-[#fafafa] [font-family:'Open_Sans','Noto_Sans',sans-serif]">
      <TitleBar />
      <div className="h-[126px] bg-[#fafafa] shadow-sm">
        <Tabs />
        <Ribbon />
      </div>
      <div className="flex flex-1">
        <Rail />
        <div className="flex min-w-0 flex-1 flex-col">
          <InfoBar />
          <div className="flex flex-1">
            <Report />
            <Filters />
          </div>
          <PageTabs />
        </div>
        <Visualizations />
        <DataPane />
      </div>
      <StatusBar />
      <Taskbar />
      <Watermark />
    </div>
  );
}
